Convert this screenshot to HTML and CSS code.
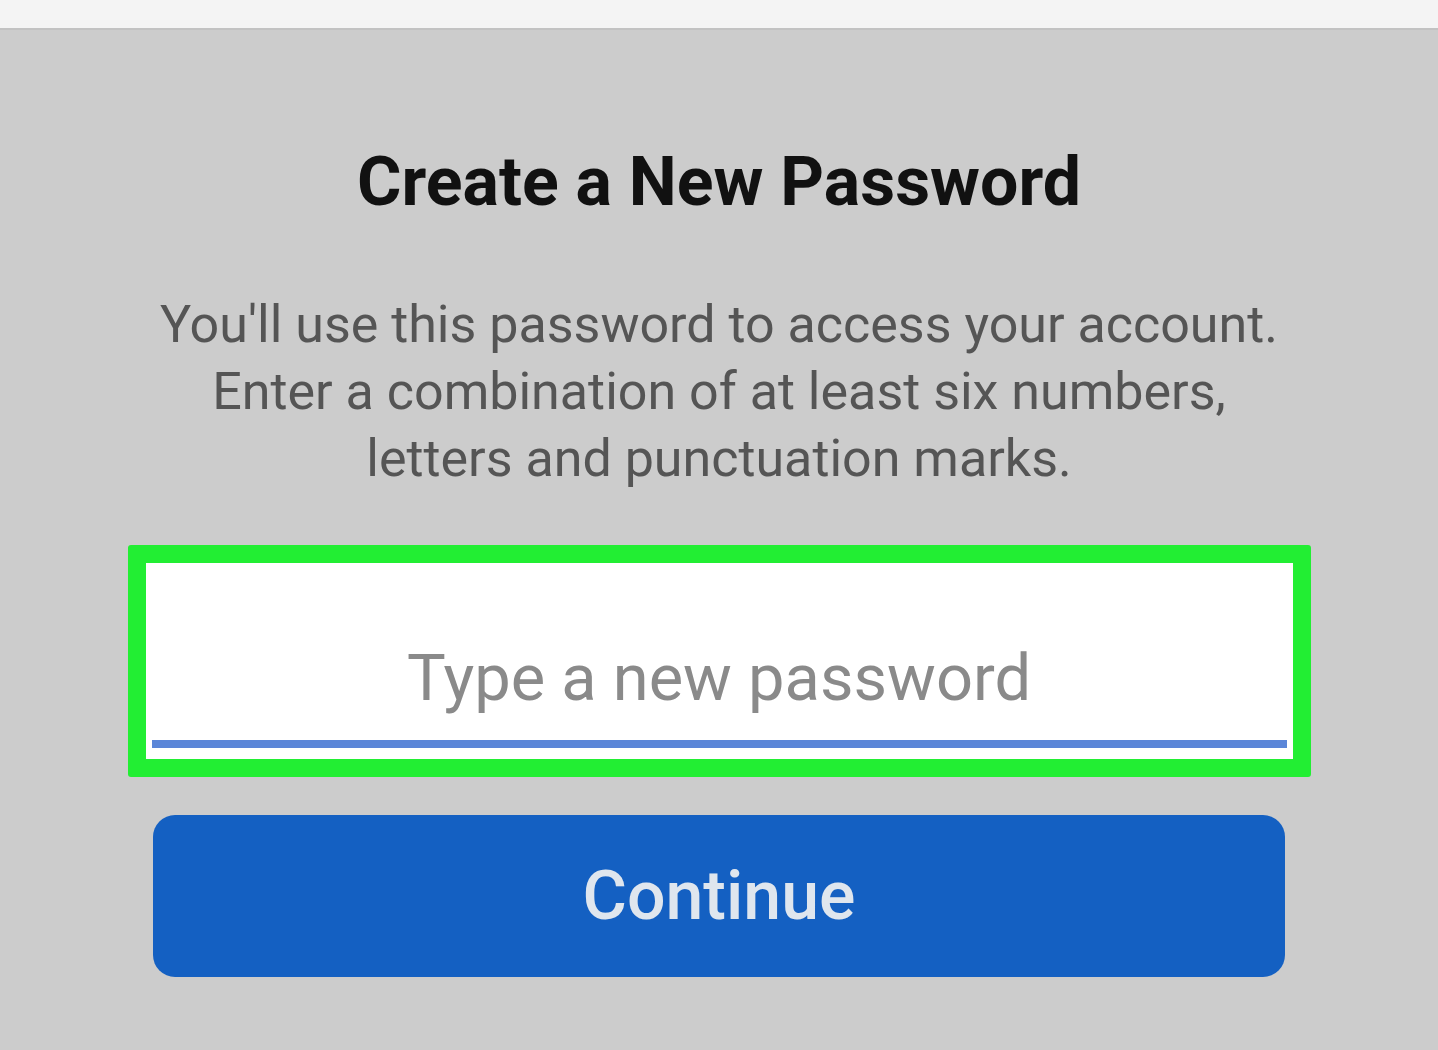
FILE: index.html
```html
<!DOCTYPE html>
<html lang="en">
<head>
    <meta charset="UTF-8">
    <meta name="viewport" content="width=device-width, initial-scale=1.0">
    <title>Create a New Password</title>
    <link rel="stylesheet" href="styles.css">
</head>
<body>

    <!-- Barra superiore -->
    <div class="top-bar"></div>

    <!-- Contenuto principale -->
    <div class="content">
        <h1 class="title">Create a New Password</h1>
        <p class="hint">
            You'll use this password to access your account.<br>
            Enter a combination of at least six numbers,<br>
            letters and punctuation marks.
        </p>

        <div class="field-box">
            <div class="field">
                <input class="field-input" type="password" placeholder="Type a new password">
            </div>
        </div>

        <button class="continue-btn">Continue</button>
    </div>

</body>
</html>
```

FILE: styles.css
```css
body {
    margin: 0;
    background-color: #cccccc;
    font-family: 'Roboto', 'Liberation Sans', sans-serif;
    overflow: hidden;
}
.top-bar {
    height: 28px;
    background-color: #f4f4f4;
    border-bottom: 2px solid #c2c2c2;
}
.content {
    display: flex;
    flex-direction: column;
    align-items: center;
}
.title {
    margin: 112px 0 0;
    font-size: 68px;
    font-weight: 700;
    line-height: 80px;
    color: #111;
}
.hint {
    margin: 69px 0 0;
    font-size: 52px;
    line-height: 67px;
    color: #555;
    text-align: center;
}
.field-box {
    margin-top: 53px;
    width: 1147px;
    border: 18px solid #22ee33;
    border-radius: 3px;
    background-color: #fff;
}
.field {
    padding: 0 6px 11px;
}
.field-input {
    display: block;
    box-sizing: border-box;
    width: 100%;
    height: 185px;
    padding: 52px 0 0;
    border: none;
    border-bottom: 8px solid #5b86d8;
    outline: none;
    background: transparent;
    font-family: 'Roboto', 'Liberation Sans', sans-serif;
    font-size: 65px;
    text-align: center;
    color: #333;
}
.field-input::placeholder {
    color: #8a8a8a;
}
.continue-btn {
    margin-top: 38px;
    width: 1132px;
    height: 162px;
    border: none;
    border-radius: 22px;
    background-color: #1460c2;
    color: #dfe6ee;
    font-family: 'Roboto', 'Liberation Sans', sans-serif;
    font-size: 68px;
    font-weight: 500;
}
```
